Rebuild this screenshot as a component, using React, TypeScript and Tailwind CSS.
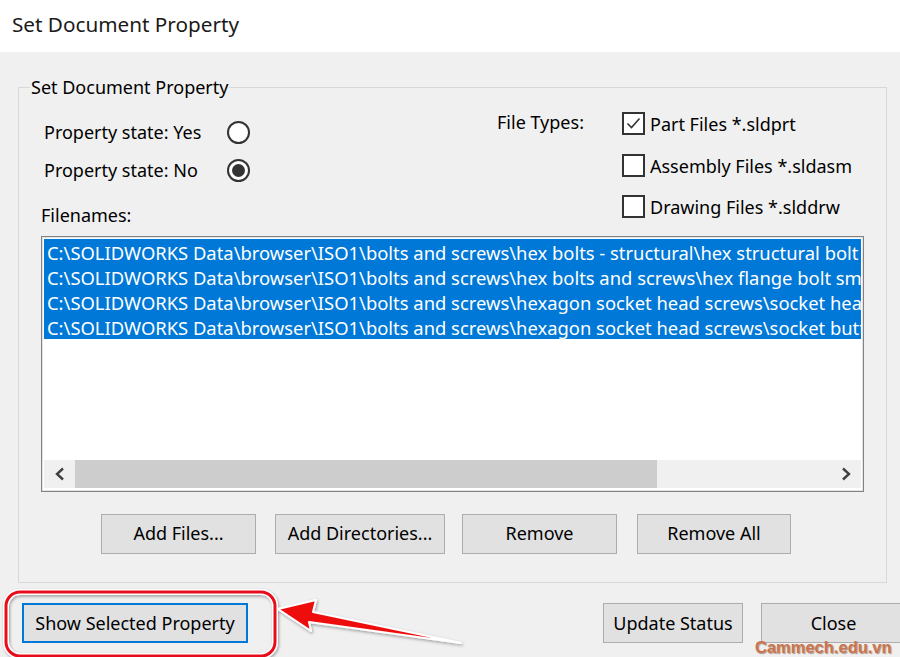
import React from "react";

const FONT = { fontFamily: '"Noto Sans", "Open Sans", sans-serif' };

const files = [
  "C:\\SOLIDWORKS Data\\browser\\ISO1\\bolts and screws\\hex bolts - structural\\hex structural bolt gradeb_iso.sldprt",
  "C:\\SOLIDWORKS Data\\browser\\ISO1\\bolts and screws\\hex bolts and screws\\hex flange bolt small_iso.sldprt",
  "C:\\SOLIDWORKS Data\\browser\\ISO1\\bolts and screws\\hexagon socket head screws\\socket head cap screw_iso.sldprt",
  "C:\\SOLIDWORKS Data\\browser\\ISO1\\bolts and screws\\hexagon socket head screws\\socket button head cap screw_iso.sldprt",
];

function Radio({ checked }: { checked?: boolean }) {
  return (
    <span className="flex h-[23px] w-[23px] items-center justify-center rounded-full border-2 border-[#333333] bg-white">
      {checked && <span className="h-[13px] w-[13px] rounded-full bg-[#333333]" />}
    </span>
  );
}

function Check({ checked, label }: { checked?: boolean; label: string }) {
  return (
    <div className="flex h-[41.5px] items-center">
      <span className="flex h-[23px] w-[23px] items-center justify-center border-2 border-[#333333] bg-white">
        {checked && (
          <svg width="17" height="17" viewBox="0 0 17 17" fill="none">
            <path d="M2.5 8.5 L6.5 12.5 L14.5 3.5" stroke="#333" strokeWidth="1.6" />
          </svg>
        )}
      </span>
      <span className="ml-[5px] pt-[2px] text-[18px] text-black">{label}</span>
    </div>
  );
}

function Btn({ label, w, focused }: { label: string; w: string; focused?: boolean }) {
  return (
    <button
      className={`flex h-[40px] shrink-0 ${w} items-center justify-center bg-[#e1e1e1] text-[18px] text-black ${
        focused ? "border-2 border-[#0078d7]" : "border border-[#adadad]"
      }`}
    >
      {label}
    </button>
  );
}

export default function App() {
  return (
    <div className="relative h-[657px] w-[900px] overflow-hidden bg-[#f0f0f0]" style={FONT}>
      {/* window caption */}
      <div className="flex h-[52px] items-center bg-white pb-[3px] pl-[12px] text-[20.7px] text-[#1a1a1a]">
        Set Document Property
      </div>

      <div className="pl-[18px] pr-[13px] pt-[23px]">
        <fieldset className="h-[508px] min-w-0 border border-[#d8d8d8] px-[22px]">
          <legend className="ml-[-11px] px-[1px] text-[18px] leading-[24px] text-black">
            Set Document Property
          </legend>

          {/* options */}
          <div className="flex">
            <div className="w-[456px] shrink-0 pt-[14px]">
              <div className="flex h-[38px] items-center pl-[3px]">
                <span className="w-[183px] text-[18px] text-black">Property state: Yes</span>
                <Radio />
              </div>
              <div className="flex h-[38px] items-center pl-[3px]">
                <span className="w-[183px] text-[18px] text-black">Property state: No</span>
                <Radio checked />
              </div>
              <div className="mt-[14px] text-[18px] leading-[24px] text-black">Filenames:</div>
            </div>
            <div className="flex pt-[4px]">
              <div className="flex h-[41.5px] w-[125px] items-center pb-[3px] text-[18px] text-black">File Types:</div>
              <div className="flex flex-col">
                <Check checked label="Part Files *.sldprt" />
                <Check label="Assembly Files *.sldasm" />
                <Check label="Drawing Files *.slddrw" />
              </div>
            </div>
          </div>

          {/* file list */}
          <div className="mt-[8px] flex h-[256px] w-full min-w-0 flex-col border border-[#828282] bg-white p-[2px] shadow-[inset_0_0_0_1px_#e3e3e3]">
            <div className="flex min-w-0 flex-col overflow-hidden">
              {files.map((f) => (
                <div
                  key={f}
                  className="h-[25px] overflow-hidden whitespace-nowrap bg-[#0078d7] pl-[3px] pt-[3px] text-[18.4px] leading-[22px] text-white"
                >
                  {f}
                </div>
              ))}
            </div>
            <div className="flex-1" />
            <div className="mb-[1px] flex h-[28px] bg-[#f0f0f0]">
              <div className="flex w-[31px] items-center justify-center">
                <svg width="12" height="14" viewBox="0 0 12 14" fill="none">
                  <path d="M9 1.5 L3 7 L9 12.5" stroke="#404040" strokeWidth="2.4" />
                </svg>
              </div>
              <div className="w-[582px] bg-[#cdcdcd]" />
              <div className="flex-1" />
              <div className="flex w-[31px] items-center justify-center">
                <svg width="12" height="14" viewBox="0 0 12 14" fill="none">
                  <path d="M3 1.5 L9 7 L3 12.5" stroke="#404040" strokeWidth="2.4" />
                </svg>
              </div>
            </div>
          </div>

          {/* list actions */}
          <div className="mt-[22px] flex pl-[60px]">
            <Btn label="Add Files..." w="w-[155px]" />
            <div className="ml-[19px] shrink-0">
              <Btn label="Add Directories..." w="w-[170px]" />
            </div>
            <div className="ml-[17px] shrink-0">
              <Btn label="Remove" w="w-[155px]" />
            </div>
            <div className="ml-[20px] shrink-0">
              <Btn label="Remove All" w="w-[154px]" />
            </div>
          </div>
        </fieldset>
      </div>

      {/* dialog actions */}
      <div className="mt-[20px] flex pl-[22px]">
        <Btn label="Show Selected Property" w="w-[226px]" focused />
        <div className="ml-[355px] shrink-0">
          <Btn label="Update Status" w="w-[140px]" />
        </div>
        <div className="ml-[18px] shrink-0">
          <Btn label="Close" w="w-[145px]" />
        </div>
      </div>

      {/* callout */}
      <svg className="pointer-events-none absolute left-0 top-0" width="900" height="657">
        <defs>
          <filter id="soft" x="-10%" y="-30%" width="120%" height="160%">
            <feDropShadow dx="1" dy="1.5" stdDeviation="1.5" floodColor="#000" floodOpacity="0.35" />
          </filter>
        </defs>
        <g filter="url(#soft)">
          <rect x="6" y="592" width="269" height="64" rx="14" fill="none" stroke="#fff" strokeWidth="6" />
          <rect x="6" y="592" width="269" height="64" rx="14" fill="none" stroke="#e8101a" strokeWidth="3" />
          <path
            d="M278 609 L316 600 L313 612 L461 643 L309 622 L311 631 Z"
            fill="#ee1111"
            stroke="#fff"
            strokeWidth="2"
            strokeLinejoin="round"
          />
        </g>
      </svg>

      <div
        className="absolute left-[755px] top-[637px] text-[16.5px] font-bold leading-[20px] text-[#c9754f]"
        style={{ fontFamily: '"Liberation Sans", Arial, sans-serif', textShadow: "1px 1px 1px rgba(90,40,20,0.45)" }}
      >
        Cammech.edu.vn
      </div>
    </div>
  );
}
